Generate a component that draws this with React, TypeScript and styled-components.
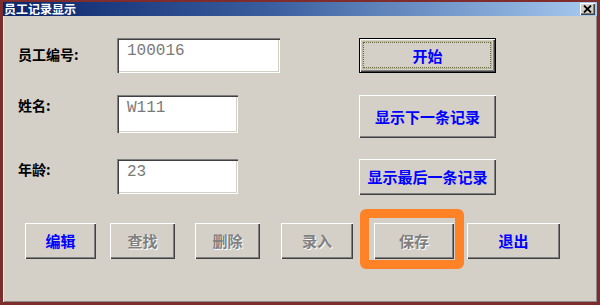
import React from "react";
import styled, { createGlobalStyle } from "styled-components";

const GlobalStyle = createGlobalStyle`
  html, body { margin: 0; padding: 0; background: #d4d0c8; overflow: hidden; }
  #root { width: 600px; height: 305px; }
`;

const CJK = `"Noto Sans CJK SC", "Noto Sans", sans-serif`;

const Window = styled.div`
  box-sizing: border-box;
  width: 600px;
  height: 305px;
  border-style: solid;
  border-color: #7e2c2c;
  border-width: 2px 3px 3px 3px;
  background: #d4d0c8;
  display: flex;
  flex-direction: column;
  box-shadow: inset 1px 1px 0 #eef4f4, inset -1px -1px 0 #8a8a8a;
`;

const TitleBar = styled.div`
  height: 14px;
  flex: none;
  display: flex;
  align-items: center;
  justify-content: space-between;
  padding: 0 2px 0 1px;
  background: linear-gradient(to right, #0a246a 0%, #3a5e9e 45%, #a6caf0 100%);
`;

const TitleText = styled.span`
  font: bold 12px/14px ${CJK};
  color: #ffffff;
  letter-spacing: 0;
`;

const CloseButton = styled.div`
  box-sizing: border-box;
  width: 15px;
  height: 12px;
  background: #d4d0c8;
  box-shadow: inset 1px 1px 0 #ffffff, inset -1px -1px 0 #404040, inset -2px -2px 0 #808080;
  display: flex;
  align-items: center;
  justify-content: center;
`;

const Body = styled.div`
  flex: 1;
  display: flex;
  flex-direction: column;
  padding: 22px 0 0 15px;
`;

const FormRow = styled.div<{ $mt: number }>`
  display: grid;
  grid-template-columns: 99px 242px 137px;
  align-items: start;
  margin-top: ${(p) => p.$mt}px;
`;

const Label = styled.div<{ $pt: number }>`
  padding-top: ${(p) => p.$pt}px;
  font: bold 14px/16px ${CJK};
  color: #000000;
`;

const Field = styled.div<{ $w: number; $h: number }>`
  box-sizing: border-box;
  width: ${(p) => p.$w}px;
  height: ${(p) => p.$h}px;
  background: #ffffff;
  box-shadow: inset 1px 1px 0 #808080, inset 2px 2px 0 #404040, inset -1px -1px 0 #ffffff, inset -2px -2px 0 #d4d0c8;
  padding: 4px 0 0 10px;
  font: 16px/18px "Liberation Mono", monospace;
  color: #7a7a7a;
`;

const Button = styled.button<{ $w: number; $h: number; $off?: boolean; $def?: boolean; $ml?: number }>`
  position: relative;
  box-sizing: border-box;
  flex: none;
  width: ${(p) => p.$w}px;
  height: ${(p) => p.$h}px;
  margin: 0 0 0 ${(p) => p.$ml ?? 0}px;
  padding: 0;
  border: none;
  background: #d4d0c8;
  font: bold 15px/18px ${CJK};
  color: ${(p) => (p.$off ? "#808080" : "#0000ff")};
  text-shadow: ${(p) => (p.$off ? "1px 1px 0 #ffffff" : "none")};
  box-shadow: ${(p) =>
    p.$def
      ? "inset 0 0 0 1px #000000, inset 2px 2px 0 #ffffff, inset -2px -2px 0 #404040, inset -3px -3px 0 #808080"
      : "inset 1px 1px 0 #ffffff, inset -1px -1px 0 #404040, inset -2px -2px 0 #808080"};
  &::after {
    content: "";
    display: ${(p) => (p.$def ? "block" : "none")};
    position: absolute;
    inset: 4px 5px 5px 4px;
    border: 1px dotted #6b6b40;
    box-shadow: 0 0 0 1px rgba(160, 160, 110, 0.5);
  }
`;

const BottomRow = styled.div`
  display: flex;
  align-items: flex-start;
  margin-top: 28px;
`;

const Highlight = styled.div<{ $ml: number }>`
  position: relative;
  flex: none;
  margin-left: ${(p) => p.$ml}px;
  display: flex;
  &::after {
    content: "";
    position: absolute;
    left: -14px;
    top: -14px;
    right: -10px;
    bottom: -10px;
    border: 9px solid #ff8226;
    border-radius: 6px;
    pointer-events: none;
  }
`;

export default function App() {
  return (
    <>
      <GlobalStyle />
      <Window>
        <TitleBar>
          <TitleText>员工记录显示</TitleText>
          <CloseButton>
            <svg width="9" height="8" viewBox="0 0 9 8">
              <path d="M1 0.5 L8 7.5 M8 0.5 L1 7.5" stroke="#000" strokeWidth="1.8" />
            </svg>
          </CloseButton>
        </TitleBar>
        <Body>
          <FormRow $mt={0}>
            <Label $pt={8}>员工编号:</Label>
            <Field $w={163} $h={35}>100016</Field>
            <Button $w={137} $h={35} $def>开始</Button>
          </FormRow>
          <FormRow $mt={22}>
            <Label $pt={2}>姓名:</Label>
            <Field $w={121} $h={38}>W111</Field>
            <Button $w={137} $h={43}>显示下一条记录</Button>
          </FormRow>
          <FormRow $mt={21}>
            <Label $pt={2}>年龄:</Label>
            <Field $w={121} $h={35}>23</Field>
            <Button $w={137} $h={36}>显示最后一条记录</Button>
          </FormRow>
          <BottomRow>
            <Button $w={71} $h={36} $ml={7}>编辑</Button>
            <Button $w={65} $h={36} $ml={14} $off>查找</Button>
            <Button $w={65} $h={36} $ml={20} $off>删除</Button>
            <Button $w={72} $h={36} $ml={21} $off>录入</Button>
            <Highlight $ml={21}>
              <Button $w={80} $h={36} $off>保存</Button>
            </Highlight>
            <Button $w={93} $h={36} $ml={13}>退出</Button>
          </BottomRow>
        </Body>
      </Window>
    </>
  );
}
